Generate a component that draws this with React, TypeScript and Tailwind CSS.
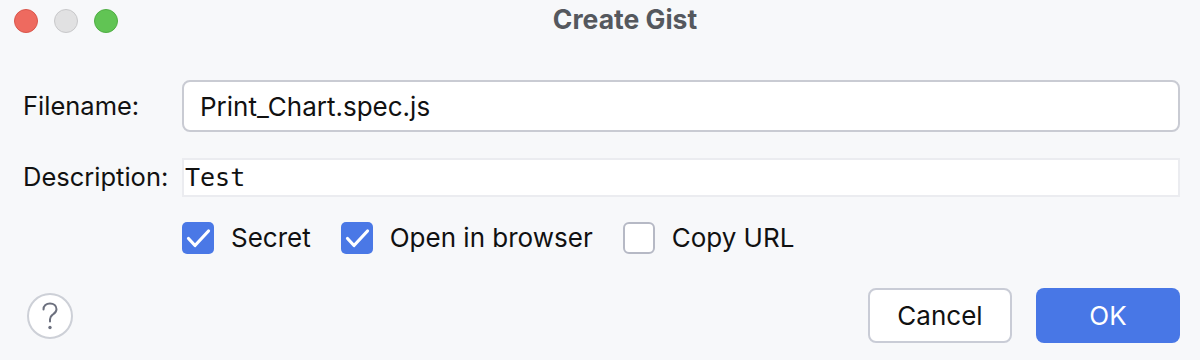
import React from "react";

function TrafficLight({ color, ring }: { color: string; ring: string }) {
  return <span className={`block w-[24px] h-[24px] rounded-full border ${color} ${ring}`} />;
}

function Check({ checked, label }: { checked: boolean; label: string }) {
  return (
    <label className="flex items-center gap-[17px]">
      {checked ? (
        <span className="flex w-[32px] h-[32px] items-center justify-center rounded-[5px] bg-[#4a78e6]">
          <svg width="32" height="32" viewBox="0 0 32 32" fill="none">
            <path d="M6.5 16.5 L13 23.5 L26.5 9" stroke="white" strokeWidth="3.2" strokeLinecap="round" strokeLinejoin="round" />
          </svg>
        </span>
      ) : (
        <span className="block w-[32px] h-[32px] rounded-[6px] border-2 border-[#b6b9c5] bg-white" />
      )}
      <span className="text-[26px] leading-[32px] text-[#111]">{label}</span>
    </label>
  );
}

export default function App() {
  return (
    <div className="w-[1200px] h-[360px] bg-[#f7f8fa] flex flex-col font-['Inter',sans-serif] overflow-hidden">
      {/* Title bar */}
      <div className="grid grid-cols-[1fr_auto_1fr] items-center h-[40px] px-[14px]">
        <div className="flex items-center gap-[16px] pt-[1px]">
          <TrafficLight color="bg-[#ee6a5f]" ring="border-[#d9564b]" />
          <TrafficLight color="bg-[#e1e1e2]" ring="border-[#c8c8ca]" />
          <TrafficLight color="bg-[#61c454]" ring="border-[#4fae43]" />
        </div>
        <div className="pl-[50px] text-[26.5px] font-bold text-[#55585e]">Create Gist</div>
        <div />
      </div>

      {/* Form */}
      <div className="grid grid-cols-[159px_1fr] items-center gap-y-[26px] pl-[23px] pr-[20px] mt-[40px]">
        <span className="text-[25.5px] text-[#111]">Filename:</span>
        <input
          readOnly
          value="Print_Chart.spec.js"
          className="h-[52px] w-full rounded-[8px] border-2 border-[#c9cbd3] bg-white px-[16px] text-[26px] text-[#111] outline-none"
        />
        <span className="text-[25.5px] text-[#111]">Description:</span>
        <input
          readOnly
          value="Test"
          className="h-[39px] w-full border-2 border-[#ebecf0] bg-white px-[1px] font-['DejaVu_Sans_Mono',monospace] text-[25px] text-[#111] outline-none"
        />
      </div>

      <div className="flex items-center gap-[30px] pl-[182px] mt-[25px]">
        <Check checked label="Secret" />
        <Check checked label="Open in browser" />
        <Check checked={false} label="Copy URL" />
      </div>

      {/* Footer */}
      <div className="flex items-center justify-between pl-[27px] pr-[20px] mt-[34px]">
        <button className="flex w-[46px] h-[46px] items-center justify-center rounded-full border-2 border-[#cdd0d7] bg-white">
          <svg width="46" height="46" viewBox="0 0 46 46" fill="none" className="shrink-0">
            <path
              d="M16.5 16.5 C16.5 12.8 19.3 10.5 23 10.5 C26.7 10.5 29.5 12.9 29.5 16.2 C29.5 19.2 27.3 20.5 25.4 21.9 C23.9 23 23 24.2 23 26.3 V28.5"
              stroke="#6c707e"
              strokeWidth="2"
              strokeLinecap="round"
            />
            <circle cx="23" cy="34.5" r="1.7" fill="#6c707e" />
          </svg>
        </button>
        <div className="flex items-center gap-[24px]">
          <button className="w-[144px] h-[55px] rounded-[8px] border-2 border-[#c9ccd6] bg-white text-[26px] text-[#111]">
            Cancel
          </button>
          <button className="w-[144px] h-[55px] rounded-[8px] bg-[#4877e6] text-[26px] text-white">
            OK
          </button>
        </div>
      </div>
    </div>
  );
}
